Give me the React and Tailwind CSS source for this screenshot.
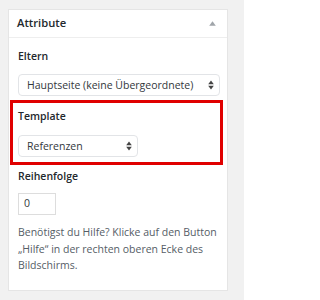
const font = { fontFamily: '"Open Sans", "Noto Sans", sans-serif' };

const Arrows = () => (
  <svg width="6" height="10" viewBox="0 0 6 10" className="shrink-0">
    <path d="M3 0.5 L5.8 4.2 L0.2 4.2 Z" fill="#444" />
    <path d="M3 9.5 L5.8 5.8 L0.2 5.8 Z" fill="#444" />
  </svg>
);

const FakeSelect = ({ label, className }) => (
  <div
    className={
      "flex items-center justify-between h-[22px] pl-[8px] pr-[5px] rounded-[4px] border border-[#e2e4e7] bg-white text-[10.5px] text-[#32373c] " +
      className
    }
  >
    <span className="whitespace-nowrap leading-none">{label}</span>
    <Arrows />
  </div>
);

export default function App() {
  return (
    <div className="w-[244px] h-[300px] bg-[#f1f1f1] pt-[9px] pl-[8px]" style={font}>
      <div className="w-[220px] h-[282px] bg-white border border-[#e5e5e5]">
        {/* header */}
        <div className="h-[28px] flex items-center justify-between px-[8px] border-b border-[#eeeeee]">
          <span className="text-[11.2px] font-semibold text-[#23282d]">Attribute</span>
          <svg width="7" height="5" viewBox="0 0 7 5" className="mr-[3px]">
            <path d="M3.5 0.3 L6.8 4.7 L0.2 4.7 Z" fill="#a0a5aa" />
          </svg>
        </div>

        <div className="pt-[9px]">
          <div className="pl-[9px] text-[10.5px] leading-[18px] font-semibold text-[#23282d]">Eltern</div>
          <FakeSelect label="Hauptseite (keine Übergeordnete)" className="mt-[9px] ml-[9px] w-[202px]" />

          <div className="mt-[4px] ml-[1px] w-[213px] h-[65px] border-[3px] border-[#e00000] pt-[4px]">
            <div className="pl-[5px] text-[10.5px] leading-[18px] font-semibold text-[#23282d]">Template</div>
            <FakeSelect label="Referenzen" className="mt-[10px] ml-[5px] w-[120px] h-[21px]" />
          </div>

          <div className="mt-[2px] pl-[9px] text-[10.5px] leading-[18px] font-semibold text-[#23282d]">Reihenfolge</div>
          <div className="mt-[8px] ml-[9px] w-[38px] h-[22px] border border-[#dddddd] flex items-center pl-[5px] text-[10.5px] text-[#32373c]">
            0
          </div>

          <p className="mt-[9px] pl-[9px] pr-[6px] text-[10.5px] leading-[16.5px] text-[#555d66]">
            Benötigst du Hilfe? Klicke auf den Button „Hilfe“ in der rechten oberen Ecke des Bildschirms.
          </p>
        </div>
      </div>
    </div>
  );
}
